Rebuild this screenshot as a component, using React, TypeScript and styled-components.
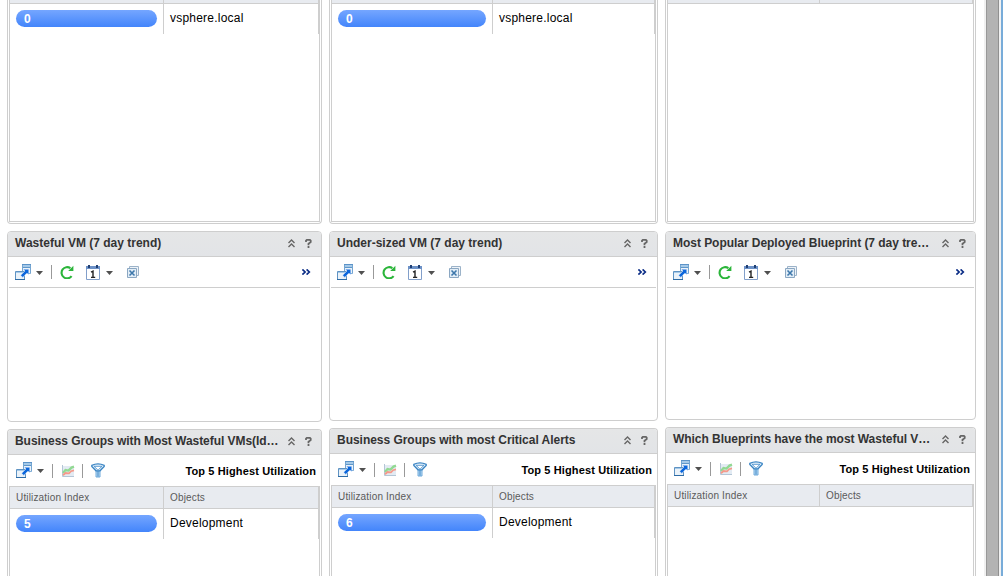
import React from "react";
import styled, { createGlobalStyle } from "styled-components";

const GlobalStyle = createGlobalStyle`
  * { box-sizing: border-box; }
  body { margin: 0; background: #fff; overflow: hidden; font-family: "Liberation Sans", Arial, sans-serif; }
  svg { flex: none; }
`;

const line = "#cecece";

const Page = styled.div`
  display: flex;
  height: 576px;
  width: 1003px;
  overflow: hidden;
`;
const Board = styled.main`
  display: flex;
  gap: 7px;
  padding-left: 7px;
  width: 984px;
`;
const Column = styled.section<{ $w: number }>`
  display: flex;
  flex-direction: column;
  gap: 7px;
  width: ${(p) => p.$w}px;
`;
const Panel = styled.article<{ $h: number; $cut?: "top" | "bottom" }>`
  display: flex;
  flex-direction: column;
  flex: none;
  height: ${(p) => p.$h}px;
  border: 1px solid ${line};
  border-radius: ${(p) => (p.$cut === "top" ? "0 0 4px 4px" : p.$cut === "bottom" ? "4px 4px 0 0" : "4px")};
  ${(p) => p.$cut === "top" && "border-top: 0;"}
  ${(p) => p.$cut === "bottom" && "border-bottom: 0;"}
  ${(p) => p.$cut === "top" && "padding-bottom: 1px;"}
  overflow: hidden;
`;
const Header = styled.header`
  display: flex;
  align-items: center;
  flex: none;
  height: 25px;
  padding: 0 9px 0 7px;
  background: linear-gradient(#e5e6e7, #e2e4e7);
  border-bottom: 1px solid ${line};
`;
const Title = styled.h2<{ $ls: number }>`
  flex: 1;
  margin: 0;
  padding-bottom: 2px;
  font-size: 12px;
  line-height: 14px;
  letter-spacing: ${(p) => p.$ls}px;
  white-space: nowrap;
  color: #333;
`;
const HeaderTools = styled.div`
  display: flex;
  align-items: center;
  gap: 9px;
  padding-bottom: 1px;
`;
const Toolbar = styled.div<{ $h: number; $ruled?: boolean }>`
  display: flex;
  align-items: center;
  flex: none;
  height: ${(p) => p.$h}px;
  margin: 0 1px;
  padding: 0 ${(p) => (p.$ruled ? 9 : 4)}px 0 ${(p) => (p.$ruled ? 6 : 7)}px;
  ${(p) => p.$ruled && `border-bottom: 1px solid ${line};`}
`;
const Separator = styled.i<{ $ml: number; $mr: number }>`
  width: 1px;
  height: 14px;
  margin: 0 ${(p) => p.$mr}px 0 ${(p) => p.$ml}px;
  background: #999;
`;
const Spacer = styled.div`
  flex: 1;
`;
const Gap = styled.i<{ $w: number }>`
  width: ${(p) => p.$w}px;
`;
const Mode = styled.strong`
  font-size: 11px;
  line-height: 14px;
  letter-spacing: 0.12px;
  white-space: nowrap;
  color: #000;
`;
const Grid = styled.div<{ $cut?: "top" | "bottom" }>`
  flex: 1;
  margin: 0 1px;
  border: 1px solid ${line};
  ${(p) => p.$cut === "top" && "border-top: 0;"}
  ${(p) => p.$cut === "bottom" && "border-bottom: 0;"}
`;
const GridHead = styled.div<{ $h: number; $first: number }>`
  display: grid;
  grid-template-columns: ${(p) => p.$first}px 1fr;
  height: ${(p) => p.$h}px;
  background: #e8ebf0;
  border-bottom: 1px solid ${line};
  border-right: 1px solid ${line};
`;
const HeadCell = styled.span`
  padding: 4px 0 0 6px;
  font-size: 10px;
  line-height: 13px;
  letter-spacing: 0.16px;
  color: #5a5a5a;
  overflow: hidden;
  & + & {
    border-left: 1px solid ${line};
  }
`;
const Row = styled.div<{ $first: number }>`
  display: grid;
  grid-template-columns: ${(p) => p.$first}px 1fr;
  height: 30px;
  border-right: 1px solid ${line};
`;
const NameCell = styled.span`
  border-left: 1px solid ${line};
  padding: 7px 0 0 6px;
  font-size: 12px;
  line-height: 14px;
  letter-spacing: 0.22px;
  color: #000;
`;
const Pill = styled.span`
  height: 17px;
  margin: 6px 6px 0;
  padding-left: 8px;
  border-radius: 9px;
  background: linear-gradient(#75a6ff, #4385fb);
  color: #fff;
  font-size: 12px;
  font-weight: bold;
  line-height: 18px;
`;
const Edge = styled.aside`
  display: flex;
  width: 19px;
  background: linear-gradient(90deg, #f0f0f0 2px, #989898 2px 3px, #b3b3b3 3px 14px, #909090 14px 15px, #f1f1f1 15px 17px, #78acd9 17px);
`;

const PopoutIcon = () => (
  <svg width="17" height="17" viewBox="0 0 17 17">
    <path d="M7.5.5h8v9h-8z" fill="#eaf2f9" stroke="#74a5d1" />
    <path d="M7 0h9v1H7z" fill="#5b93c8" />
    <path d="M8 1h7v2H8z" fill="#a5c9e8" />
    <path d="M8 3h7v1H8z" fill="#5f97c9" />
    <path d="M.5 7.5h9v8h-9z" fill="#eaf2f9" stroke="#5f93c3" />
    <path d="M0 15h10v1H0z" fill="#2d6ba5" />
    <path d="M1 8h8v1H1z" fill="#a5c9e8" />
    <path d="M8.2 5.2h5.6v5.6l-1.8-1.8-4.2 4.4-2.2-2.2L10 7z" fill="#0b66dc" stroke="#f4f9ff" strokeWidth=".5" />
  </svg>
);
const CaretIcon = () => (
  <svg width="7" height="5" viewBox="0 0 7 5">
    <path d="M0 1h7L3.5 5z" fill="#505050" />
  </svg>
);
const RefreshIcon = () => (
  <svg width="14" height="14" viewBox="0 0 14 14">
    <path d="M10.4 3.2A5.6 5.6 0 1 0 11.6 11.2" fill="none" stroke="#2bb53a" strokeWidth="2.1" />
    <path d="M13.4.8v5.2H8.2z" fill="#2bb53a" />
  </svg>
);
const CalendarIcon = () => (
  <svg width="14" height="15" viewBox="0 0 14 15">
    <path d="M.5 2.5h13v12H.5z" fill="#fff" stroke="#829fca" />
    <path d="M0 1h14v3H0z" fill="#6c91c7" />
    <path d="M2 0h2v3H2zM10 0h2v3h-2z" fill="#203f72" />
    <path d="M5 7.2L7 6.2v6M5 12.4h4.2" fill="none" stroke="#222" strokeWidth="1.4" />
  </svg>
);
const CloseAllIcon = () => (
  <svg width="13" height="13" viewBox="0 0 13 13">
    <path d="M2.5.5h9v9h-9z" fill="#eef3f8" stroke="#9cb3c9" />
    <path d="M.5 2.5h9v9h-9z" fill="#e1edf7" stroke="#8ba7c2" />
    <path d="M2.5 4.5l5 5m0-5l-5 5" stroke="#3e78ab" strokeWidth="1.6" />
  </svg>
);
const ChartIcon = () => (
  <svg width="13" height="12" viewBox="0 0 13 12">
    <path d="M0 1h12v10H0z" fill="#e3ebf3" />
    <path d="M.5 0v11.5H12" fill="none" stroke="#b4c6d6" />
    <path d="M1 8L3.5 5l3 .6L9.5 2.6l2.5-1" fill="none" stroke="#92d992" strokeWidth="2.3" />
    <path d="M1 10.2L3.5 8l3.5.4L9 6.2l3-.8" fill="none" stroke="#f59a8a" strokeWidth="1.8" />
  </svg>
);
const FilterIcon = () => (
  <svg width="14" height="15" viewBox="0 0 14 15">
    <path d="M5 7.5h4V14H5z" fill="#b9daf4" stroke="#6faadb" />
    <path d="M.8 2.4Q7-.6 13.2 2.4v1L9 7.8H5L.8 3.4z" fill="#e4f1fb" stroke="#3b85c4" strokeWidth="1.3" />
    <path d="M3 3.3h8L7.6 6.6H6.4z" fill="#fff" stroke="#4f93cd" strokeWidth=".9" />
    <path d="M7 8v5.5" stroke="#3b85c4" />
  </svg>
);
const CollapseIcon = () => (
  <svg width="8" height="9" viewBox="0 0 8 9">
    <path d="M.5 4L3.5 1l3 3M.5 8l3-3 3 3" fill="none" stroke="#666" strokeWidth="1.4" />
  </svg>
);
const HelpIcon = () => (
  <svg width="7" height="9" viewBox="0 0 7 9">
    <path d="M1 3V1.6L1.8.9h3.1l.8.8v1.4L3.5 4.8v1.4M2.6 8h1.8" fill="none" stroke="#666" strokeWidth="1.8" />
  </svg>
);
const MoreIcon = () => (
  <svg width="9" height="6" viewBox="0 0 9 6">
    <path d="M.4.4L3.1 3 .4 5.6M4.6 .4L7.3 3 4.6 5.6" fill="none" stroke="#0b2d86" strokeWidth="1.7" />
  </svg>
);

type ColumnData = {
  w: number;
  first: number;
  mid: number;
  trend: [string, number];
  top: [string, number];
  before?: string;
  after?: string;
};

const columns: ColumnData[] = [
  { w: 315, first: 153, mid: 191, trend: ["Wasteful VM (7 day trend)", 0], top: ["Business Groups with Most Wasteful VMs(Id…", -0.05], before: "0", after: "5" },
  { w: 329, first: 160, mid: 190, trend: ["Under-sized VM (7 day trend)", 0], top: ["Business Groups with most Critical Alerts", -0.03], before: "0", after: "6" },
  { w: 311, first: 151, mid: 189, trend: ["Most Popular Deployed Blueprint (7 day tre…", -0.04], top: ["Which Blueprints have the most Wasteful V…", -0.04] },
];

const PanelHeader = ({ title }: { title: [string, number] }) => (
  <Header>
    <Title $ls={title[1]}>{title[0]}</Title>
    <HeaderTools>
      <CollapseIcon />
      <HelpIcon />
    </HeaderTools>
  </Header>
);

const DataRow = ({ first, value, name }: { first: number; value: string; name: string }) => (
  <Row $first={first}>
    <Pill>{value}</Pill>
    <NameCell>{name}</NameCell>
  </Row>
);

export default function App() {
  return (
    <Page>
      <GlobalStyle />
      <Board>
        {columns.map((c) => (
          <Column key={c.w} $w={c.w}>
            <Panel $h={224} $cut="top">
              <Grid $cut="top">
                <GridHead $h={4} $first={c.first}>
                  <HeadCell />
                  <HeadCell />
                </GridHead>
                {c.before && <DataRow first={c.first} value={c.before} name="vsphere.local" />}
              </Grid>
            </Panel>
            <Panel $h={c.mid}>
              <PanelHeader title={c.trend} />
              <Toolbar $h={31} $ruled>
                <PopoutIcon />
                <Gap $w={4} />
                <CaretIcon />
                <Separator $ml={8} $mr={8} />
                <RefreshIcon />
                <Gap $w={12} />
                <CalendarIcon />
                <Gap $w={6} />
                <CaretIcon />
                <Gap $w={14} />
                <CloseAllIcon />
                <Spacer />
                <MoreIcon />
              </Toolbar>
            </Panel>
            <Panel $h={160} $cut="bottom">
              <PanelHeader title={c.top} />
              <Toolbar $h={31}>
                <PopoutIcon />
                <Gap $w={4} />
                <CaretIcon />
                <Separator $ml={8} $mr={9} />
                <ChartIcon />
                <Separator $ml={7} $mr={8} />
                <FilterIcon />
                <Spacer />
                <Mode>Top 5 Highest Utilization</Mode>
              </Toolbar>
              <Grid $cut="bottom">
                <GridHead $h={22} $first={c.first}>
                  <HeadCell>Utilization Index</HeadCell>
                  <HeadCell>Objects</HeadCell>
                </GridHead>
                {c.after && <DataRow first={c.first} value={c.after} name="Development" />}
              </Grid>
            </Panel>
          </Column>
        ))}
      </Board>
      <Edge />
    </Page>
  );
}
